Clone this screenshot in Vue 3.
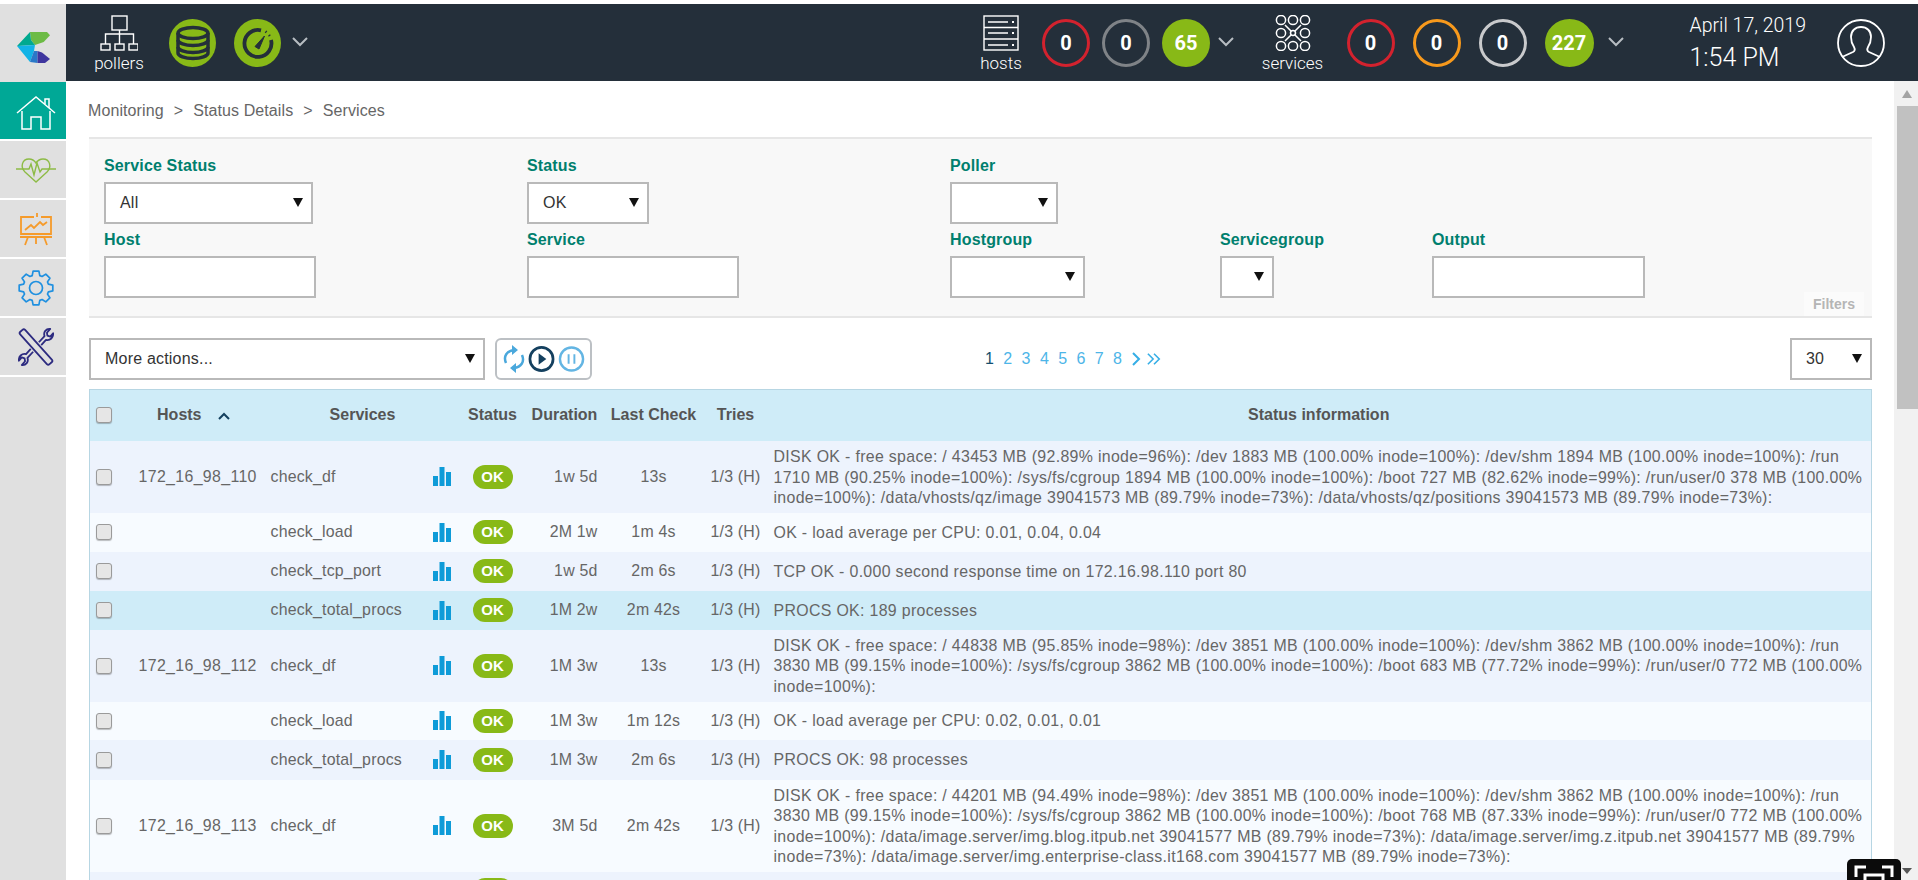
<template>
  <div class="page">
    <header class="topbar">
      <div class="logo">
        <svg width="33" height="31" viewBox="0 0 33 31">
          <polygon points="13,0 30,0 33,3.300 26.700,10 18,13 14,8" fill="#6cbb45" />
          <polygon points="13,0 14,8 18,13 0,14" fill="#00a98f" />
          <polygon points="0,14 18,13 17,19 13,30" fill="#12b3e6" />
          <polygon points="13,30 17,19 20.500,19 20.500,31" fill="#2a78c8" />
          <polygon points="20.500,19 25,20.500 33,27 28,31 20.500,31" fill="#3f369e" />
        </svg>
      </div>

      <div class="bar-group pollers">
        <div class="labelled">
          <svg width="38" height="36" viewBox="0 0 38 36" fill="none" stroke="#fff" stroke-width="1.4">
            <rect x="12" y="1" width="15" height="14" />
            <path d="M19.500 15v14M5.500 29V19h28v10" />
            <rect x="1" y="29" width="9" height="6" />
            <rect x="15" y="29" width="9" height="6" />
            <rect x="29" y="29" width="9" height="6" />
          </svg>
          <span>pollers</span>
        </div>
        <span class="round green">
          <svg width="48" height="48" viewBox="0 0 48 48" fill="none" stroke="#242f3a" stroke-width="3.500">
            <ellipse cx="24" cy="14" rx="15" ry="5.500" />
            <path d="M9 14v20c0 3 7 5.500 15 5.500s15-2.500 15-5.500V14" />
            <path d="M9 21c0 3 7 5.500 15 5.500s15-2.500 15-5.500M9 28c0 3 7 5.500 15 5.500s15-2.500 15-5.500" />
          </svg>
        </span>
        <span class="round green gauge">
          <svg width="48" height="48" viewBox="0 0 48 48" fill="none" stroke="#242f3a" stroke-width="3.800">
            <path d="M27 11.300A13.500 13.500 0 1 0 37 21" />
            <path d="M31.500 12.500l1 .8M35 16l.8 1" stroke-width="2.500" />
            <path d="M21 27.500l9.500-10.500-5.500 13z" fill="#242f3a" stroke-width="1" />
          </svg>
        </span>
        <svg class="chev" width="16" height="10" viewBox="0 0 16 10"><path d="M1 1l7 7 7-7" /></svg>
      </div>

      <div class="bar-group hosts">
        <div class="labelled">
          <svg width="36" height="36" viewBox="0 0 36 36" fill="none" stroke="#fff" stroke-width="1.4">
            <rect x="1" y="1" width="34" height="34" />
            <path d="M1 12.500h34M1 24h34M5 7h20M5 18h20M5 30h20" />
            <path d="M29 7h2M29 18h2M29 30h2" stroke-width="2" />
          </svg>
          <span>hosts</span>
        </div>
        <span class="count ring red">0</span>
        <span class="count ring grey">0</span>
        <span class="count green">65</span>
        <svg class="chev" width="16" height="10" viewBox="0 0 16 10"><path d="M1 1l7 7 7-7" /></svg>
      </div>

      <div class="bar-group services">
        <div class="labelled">
          <svg width="36" height="36" viewBox="0 0 36 36" fill="none" stroke="#fff" stroke-width="1.5">
            <circle v-for="c in serviceDots" :key="c[0] + '-' + c[1]" :cx="c[0]" :cy="c[1]" r="4.600" />
            <circle cx="18" cy="18" r="2.500" />
            <path d="M10 10l6 6M26 10l-6 6M10 26l6-6M26 26l-6-6" />
          </svg>
          <span>services</span>
        </div>
        <span class="count ring red">0</span>
        <span class="count ring orange">0</span>
        <span class="count ring light">0</span>
        <span class="count green">227</span>
        <svg class="chev" width="16" height="10" viewBox="0 0 16 10"><path d="M1 1l7 7 7-7" /></svg>
      </div>

      <div class="clock">
        <div class="date">April 17, 2019</div>
        <div class="time">1:54 PM</div>
      </div>
      <svg class="user" width="48" height="48" viewBox="0 0 48 48" fill="none" stroke="#fff" stroke-width="1.800">
        <circle cx="24" cy="24" r="23" />
        <path d="M5 38l11-5c2-1 2-3 1-5-2-3-3-6-3-10 0-6 4-10 10-10s10 4 10 10c0 4-1 7-3 10-1 2-1 4 1 5l11 5" />
      </svg>
    </header>

    <div class="body">
      <nav class="sidebar">
        <a class="tile active">
          <svg class="home" width="40" height="34" viewBox="0 0 40 34" fill="none" stroke="#fff" stroke-width="1.500">
            <path d="M1 17L20 1l19 16" />
            <path d="M29 8V3h4v9" />
            <path d="M6 15v18h9V21h10v12h9V15" />
          </svg>
        </a>
        <a class="tile">
          <svg width="40" height="26" viewBox="0 0 40 26" fill="none" stroke="#8dbb45" stroke-width="1.400">
            <path d="M0 12h7M33 12h7" />
            <path d="M20 25L9 15C4 10 6 2 13 2c3 0 5 1 7 4 2-3 4-4 7-4 7 0 9 8 4 13z" />
            <path d="M7 12h6l2-5 3 11 3-12 3 9 2-3h7" />
          </svg>
        </a>
        <a class="tile">
          <svg width="32" height="34" viewBox="0 0 32 34" fill="none" stroke="#f59b2b" stroke-width="1.800">
            <path d="M17 5V1M14 5H1v17h30V5H21" />
            <path d="M0 25h32M8 25L5 33M24 25l3 8M16 25v7" />
            <path d="M5 18l6-5 3 3 6-6 3 3 4-3" />
          </svg>
        </a>
        <a class="tile">
          <svg width="38" height="36" viewBox="0 0 38 36" fill="none" stroke="#1f90e0" stroke-width="1.700">
            <circle cx="19" cy="18" r="6.500" />
            <path :d="gearPath" stroke-linejoin="round" />
          </svg>
        </a>
        <a class="tile">
          <svg width="36" height="38" viewBox="0 0 36 40" fill="none" stroke="#2d2b80" stroke-width="1.900">
            <rect x="-3.500" y="-23" width="7" height="46" rx="2" transform="translate(18 20) rotate(-42)" />
            <path d="M21 15l6-6.500c-1.500-4 1.500-8 6-7.500l-3.500 4 .5 3 3 1 3-3.500c.5 4.500-3 8-7.500 7l-5 5.500" stroke-linejoin="round" />
            <path d="M15 25l-6 6.500c1.500 4-1.500 8-6 7.500l3.500-4-.5-3-3-1-3 3.500c-.5-4.500 3-8 7.500-7l5-5.500" stroke-linejoin="round" />
          </svg>
        </a>
      </nav>

      <main class="content">
        <div class="breadcrumb">
          <span>Monitoring</span><i>&gt;</i><span>Status Details</span><i>&gt;</i><span>Services</span>
        </div>

        <section class="filters">
          <div class="field"><label>Service Status</label><div class="select" style="width: 209px">All<b class="caret"></b></div></div>
          <div class="field"><label>Status</label><div class="select" style="width: 122px">OK<b class="caret"></b></div></div>
          <div class="field wide"><label>Poller</label><div class="select" style="width: 108px"><b class="caret"></b></div></div>

          <div class="field"><label>Host</label><div class="input" style="width: 212px"></div></div>
          <div class="field"><label>Service</label><div class="input" style="width: 212px"></div></div>
          <div class="field"><label>Hostgroup</label><div class="select" style="width: 135px"><b class="caret"></b></div></div>
          <div class="field"><label>Servicegroup</label><div class="select" style="width: 54px"><b class="caret"></b></div></div>
          <div class="field"><label>Output</label><div class="input" style="width: 213px"></div></div>

          <span class="filters-tag">Filters</span>
        </section>

        <div class="toolbar">
          <div class="select actions">More actions...<b class="caret"></b></div>
          <div class="buttons">
            <svg width="22" height="28" viewBox="0 0 22 28" fill="none" stroke="#4aa8dc" stroke-width="2.500">
              <path d="M3 18C0 11 4 6 11 5" />
              <path d="M19 10c3 7-1 12-8 13" />
              <path d="M9 0l6 5-6 5zM13 18l-6 5 6 5z" fill="#4aa8dc" stroke="none" />
            </svg>
            <svg width="27" height="28" viewBox="0 0 28 28" fill="none">
              <circle cx="14" cy="14" r="12" stroke="#14405f" stroke-width="2.800" />
              <path d="M11 8l8 6-8 6z" fill="#14405f" />
            </svg>
            <svg width="27" height="28" viewBox="0 0 28 28" fill="none" stroke="#63b5e3">
              <circle cx="14" cy="14" r="12" stroke-width="2.500" />
              <path d="M11 9v10M17 9v10" stroke-width="2" />
            </svg>
          </div>
          <div class="pager">
            <span v-for="n in 8" :key="n" :class="{ current: n === 1 }">{{ n }}</span>
            <svg width="11" height="14" viewBox="0 0 11 14" fill="none" stroke="#35aee6" stroke-width="2"><path d="M2 1l6 6-6 6" /></svg>
            <svg class="last" width="14" height="14" viewBox="0 0 16 14" fill="none" stroke="#35aee6" stroke-width="1.800"><path d="M1 1l6 6-6 6M8 1l6 6-6 6" /></svg>
          </div>
          <div class="select per-page">30<b class="caret"></b></div>
        </div>

        <table class="services-table">
          <colgroup>
            <col style="width: 36px" />
            <col style="width: 141px" />
            <col style="width: 164px" />
            <col style="width: 28px" />
            <col style="width: 68px" />
            <col style="width: 76px" />
            <col style="width: 102px" />
            <col style="width: 62px" />
            <col />
          </colgroup>
          <thead>
            <tr>
              <th class="check-cell"><input type="checkbox" class="check" /></th>
              <th class="host-head">Hosts
                <svg width="12" height="8" viewBox="0 0 12 8" fill="none" stroke="#14405f" stroke-width="2"><path d="M1 7l5-5 5 5" /></svg>
              </th>
              <th colspan="2">Services</th>
              <th>Status</th>
              <th>Duration</th>
              <th>Last Check</th>
              <th>Tries</th>
              <th>Status information</th>
            </tr>
          </thead>
          <tbody>
            <tr v-for="(row, i) in rows" :key="i" :class="{ odd: i % 2 === 0, hover: i === 3 }" :style="{ height: row.h + 'px' }">
              <td class="check-cell"><input type="checkbox" class="check" /></td>
              <td class="host">{{ row.host }}</td>
              <td class="service">{{ row.service }}</td>
              <td class="graph">
                <svg width="18" height="19" viewBox="0 0 18 19" fill="#0e9bd8"><rect x="0" y="9" width="5" height="10" /><rect x="6.500" y="0" width="5" height="19" /><rect x="13" y="5" width="5" height="14" /></svg>
              </td>
              <td class="center"><span class="ok">OK</span></td>
              <td class="duration">{{ row.duration }}</td>
              <td class="center">{{ row.last }}</td>
              <td class="center">1/3 (H)</td>
              <td class="info">{{ row.info }}</td>
            </tr>
          </tbody>
        </table>
      </main>

      <div class="scrollbar">
        <b class="arrow up"></b>
        <div class="thumb"></div>
        <div class="fill"></div>
        <b class="arrow down"></b>
      </div>
    </div>

    <div class="fullscreen">
      <svg width="40" height="22" viewBox="0 0 40 22" fill="none" stroke="#fff" stroke-width="3">
        <path d="M2 12V2h10M28 2h10v10" />
        <rect x="11" y="10" width="18" height="12" />
      </svg>
    </div>
  </div>
</template>

<script setup>
const serviceDots = [
  [6, 5], [18, 5], [30, 5],
  [6, 18], [30, 18],
  [6, 31], [18, 31], [30, 31]
]

// eight toothed outline for the settings icon
const gearPath = (() => {
  const pts = []
  for (let i = 0; i < 8; i++) {
    const a = (i * Math.PI) / 4
    const d = [[-0.3, 13], [-0.17, 17], [0.17, 17], [0.3, 13]]
    d.forEach(([off, r]) => {
      pts.push((19 + r * Math.sin(a + off)).toFixed(1) + ' ' + (18 - r * Math.cos(a + off)).toFixed(1))
    })
  }
  return 'M' + pts.join('L') + 'Z'
})()

const rows = [
  {
    h: 71, host: '172_16_98_110', service: 'check_df', duration: '1w 5d', last: '13s',
    info: 'DISK OK - free space: / 43453 MB (92.89% inode=96%): /dev 1883 MB (100.00% inode=100%): /dev/shm 1894 MB (100.00% inode=100%): /run 1710 MB (90.25% inode=100%): /sys/fs/cgroup 1894 MB (100.00% inode=100%): /boot 727 MB (82.62% inode=99%): /run/user/0 378 MB (100.00% inode=100%): /data/vhosts/qz/image 39041573 MB (89.79% inode=73%): /data/vhosts/qz/positions 39041573 MB (89.79% inode=73%):'
  },
  { h: 39, host: '', service: 'check_load', duration: '2M 1w', last: '1m 4s', info: 'OK - load average per CPU: 0.01, 0.04, 0.04' },
  { h: 39, host: '', service: 'check_tcp_port', duration: '1w 5d', last: '2m 6s', info: 'TCP OK - 0.000 second response time on 172.16.98.110 port 80' },
  { h: 39, host: '', service: 'check_total_procs', duration: '1M 2w', last: '2m 42s', info: 'PROCS OK: 189 processes' },
  {
    h: 72, host: '172_16_98_112', service: 'check_df', duration: '1M 3w', last: '13s',
    info: 'DISK OK - free space: / 44838 MB (95.85% inode=98%): /dev 3851 MB (100.00% inode=100%): /dev/shm 3862 MB (100.00% inode=100%): /run 3830 MB (99.15% inode=100%): /sys/fs/cgroup 3862 MB (100.00% inode=100%): /boot 683 MB (77.72% inode=99%): /run/user/0 772 MB (100.00% inode=100%):'
  },
  { h: 38, host: '', service: 'check_load', duration: '1M 3w', last: '1m 12s', info: 'OK - load average per CPU: 0.02, 0.01, 0.01' },
  { h: 40, host: '', service: 'check_total_procs', duration: '1M 3w', last: '2m 6s', info: 'PROCS OK: 98 processes' },
  {
    h: 92, host: '172_16_98_113', service: 'check_df', duration: '3M 5d', last: '2m 42s',
    info: 'DISK OK - free space: / 44201 MB (94.49% inode=98%): /dev 3851 MB (100.00% inode=100%): /dev/shm 3862 MB (100.00% inode=100%): /run 3830 MB (99.15% inode=100%): /sys/fs/cgroup 3862 MB (100.00% inode=100%): /boot 768 MB (87.33% inode=99%): /run/user/0 772 MB (100.00% inode=100%): /data/image.server/img.blog.itpub.net 39041577 MB (89.79% inode=73%): /data/image.server/img.z.itpub.net 39041577 MB (89.79% inode=73%): /data/image.server/img.enterprise-class.it168.com 39041577 MB (89.79% inode=73%):'
  },
  { h: 38, host: '', service: 'check_load', duration: '3M 5d', last: '1m 12s', info: 'OK - load average per CPU: 0.02, 0.01, 0.01' }
]
</script>

<style>
html, body { margin: 0; background: #fff; overflow: hidden; }
</style>

<style scoped>
.page {
  position: relative;
  height: 880px;
  padding-top: 4px;
  box-sizing: border-box;
  overflow: hidden;
  font-family: "Liberation Sans", Arial, sans-serif;
  font-size: 16px;
  color: #666;
  background: #fff;
}

/* top bar */
.topbar {
  height: 77px;
  display: flex;
  align-items: center;
  background: #242f3a;
  color: #fff;
  font-family: Roboto, "Liberation Sans", sans-serif;
  font-weight: 300;
}
.logo {
  width: 66px;
  height: 100%;
  flex: none;
  display: flex;
  align-items: center;
  justify-content: center;
  background: #e0e0e0;
}
.logo svg { margin-top: 10px; }
.bar-group { display: flex; align-items: center; }
.pollers { margin-left: 34px; }
.labelled {
  width: 38px;
  margin-top: 5px;
  display: flex;
  flex-direction: column;
  align-items: center;
  font-size: 17px;
  line-height: 24px;
}
.labelled span { white-space: nowrap; }
.round {
  width: 47px;
  height: 48px;
  border-radius: 50%;
  overflow: hidden;
  margin-left: 31px;
}
.round svg { display: block; }
.gauge { margin-left: 18px; }
.green { background: #88b917; }
.chev { fill: none; stroke: #b7bdc2; stroke-width: 2; margin-left: 11px; margin-top: -2px; }

.hosts { margin-left: 675px; }
.hosts .labelled { width: 36px; }
.hosts .count:first-of-type { margin-left: 23px; }
.services { margin-left: 40.500px; }
.services .labelled { width: 36px; }
.services .count { margin-left: 18px; }
.services .count.red { margin-left: 36px; }
.services .chev { margin-left: 14.500px; }
.count {
  width: 48px;
  height: 48px;
  box-sizing: border-box;
  border-radius: 50%;
  margin-left: 12px;
  display: flex;
  align-items: center;
  justify-content: center;
  font-size: 20px;
  font-weight: 700;
  color: #fff;
}
.services .count.green { width: 49px; }
.ring { border: 3px solid #888; }
.ring.red { border-color: #d3222e; }
.ring.grey { border-color: #7f8387; }
.ring.orange { border-color: #f7991c; }
.ring.light { border-color: #c9cacc; }
.hosts .chev { margin-left: 8px; }

.clock { margin-left: 65.500px; line-height: 1; white-space: nowrap; padding-top: 1px; }
.date { font-size: 19.500px; margin-bottom: 8.600px; }
.time { font-size: 25px; }
.user { margin-left: 31px; flex: none; }

/* main */
.body { display: flex; height: 799px; }
.sidebar {
  width: 66px;
  flex: none;
  padding-top: 1px;
  background: #e0e0e0;
  display: flex;
  flex-direction: column;
  gap: 2px;
}
.tile {
  height: 57px;
  padding-left: 5px;
  display: flex;
  align-items: center;
  justify-content: center;
  background: #e0e0e0;
  box-shadow: 0 2px 0 #fff;
}
.tile.active { background: #00a896; }
.home { margin-top: 4px; }

.content {
  flex: 1;
  min-width: 0;
  padding: 0 22px 0 23px;
}
.breadcrumb {
  height: 56px;
  box-sizing: border-box;
  padding: 4px 0 0;
  margin-left: -1px;
  display: flex;
  align-items: center;
  font-size: 16px;
  letter-spacing: .1px;
  color: #666;
}
.breadcrumb i {
  font-style: normal;
  margin: 0 10px;
}

.filters {
  position: relative;
  height: 181px;
  box-sizing: border-box;
  padding: 18px 0 0 15px;
  background: #f8f8f8;
  border-top: 2px solid #e6e6e6;
  border-bottom: 2px solid #e6e6e6;
  display: grid;
  grid-template-columns: 423px 423px 270px 212px 1fr;
  grid-template-rows: 74px 67px;
}
.field { display: flex; flex-direction: column; }
.field.wide { grid-column: 3 / -1; }
.field label {
  font-size: 16px;
  font-weight: 700;
  line-height: 18px;
  margin-bottom: 7px;
  letter-spacing: .15px;
  color: #007f6e;
}
.select, .input {
  position: relative;
  height: 42px;
  box-sizing: border-box;
  background: #fff;
  border: 2px solid #b9b9b9;
  font-size: 16px;
  letter-spacing: .2px;
  color: #333;
  display: flex;
  align-items: center;
  padding-left: 14px;
}
.caret {
  position: absolute;
  right: 8px;
  top: 14px;
  border-left: 5px solid transparent;
  border-right: 5px solid transparent;
  border-top: 9px solid #111;
}
.filters-tag {
  position: absolute;
  right: 8px;
  bottom: 0;
  width: 60px;
  height: 24px;
  line-height: 24px;
  text-align: center;
  font-size: 14px;
  font-weight: 700;
  color: #b5b5b5;
  background: #fbfbfb;
}

.toolbar {
  margin-top: 20px;
  height: 42px;
  display: flex;
  align-items: center;
}
.actions { width: 396px; }
.buttons {
  margin-left: 10px;
  width: 97px;
  height: 42px;
  box-sizing: border-box;
  border: 2px solid #bcc0c4;
  border-radius: 6px;
  display: flex;
  align-items: center;
  justify-content: center;
  gap: 3px;
}
.pager {
  margin-left: 393px;
  display: flex;
  align-items: center;
  gap: 9.400px;
  font-size: 16px;
  color: #4db5e8;
  width: 182px;
}
.pager .current { color: #14506f; }
.pager .last { margin-left: -5px; }
.per-page { margin-left: auto; width: 82px; }

.services-table {
  margin-top: 9px;
  width: 100%;
  table-layout: fixed;
  border-collapse: collapse;
  border: 1px solid #b7d6e3;
  font-size: 15.900px;
}
.services-table th {
  height: 49px;
  padding: 0 0 2px;
  background: #cfecf8;
  color: #555;
  font-size: 16px;
  font-weight: 700;
  white-space: nowrap;
  text-align: center;
}
.services-table th.host-head { padding-right: 5px; }
.host-head svg { margin-left: 12px; }
.services-table td {
  padding: 0;
  background: #f7fbff;
  color: #666;
  white-space: nowrap;
  letter-spacing: .2px;
}
.services-table tr.odd td { background: #edf3fd; }
.services-table tr.hover td { background: #cfecf8; }
.center { text-align: center; }
.services-table .check-cell { padding-right: 7px; }
.check {
  appearance: none;
  display: block;
  width: 16px;
  height: 16px;
  margin: 0 auto;
  box-sizing: border-box;
  border: 1px solid #9a9a9a;
  border-radius: 3px;
  background: #e6e6e6;
  box-shadow: 0 1px 1px rgba(0, 0, 0, .25);
}
.services-table td.host { padding-left: 13px; letter-spacing: .35px; }
.services-table td.service { padding-left: 4px; }
.services-table td.graph { padding-left: 2px; }
td.graph svg { display: block; }
.ok {
  display: inline-block;
  width: 40px;
  height: 24px;
  line-height: 24px;
  border-radius: 12px;
  background: #88b917;
  color: #fff;
  font-size: 15px;
  font-weight: 700;
  letter-spacing: 0;
}
.services-table td.duration { text-align: right; padding-right: 5px; }
.services-table td.info {
  padding: 6px 8px 4px 7px;
  line-height: 20.500px;
  white-space: normal;
  letter-spacing: .33px;
}

.scrollbar {
  width: 24px;
  flex: none;
  padding-left: 2px;
  box-sizing: border-box;
  background: #f1f1f1;
  display: flex;
  flex-direction: column;
  align-items: center;
}
.arrow {
  flex: none;
  border-left: 5px solid transparent;
  border-right: 5px solid transparent;
}
.arrow.up { margin-top: 9px; border-bottom: 8px solid #a3a3a3; }
.arrow.down { margin-bottom: 6px; border-top: 6px solid #555; }
.thumb { width: 21px; height: 303px; margin-top: 8px; background: #c1c1c1; }
.fill { flex: 1; }

.fullscreen {
  position: absolute;
  left: 1847px;
  top: 859px;
  width: 54px;
  height: 40px;
  border-radius: 5px;
  background: #0b0b0b;
  display: flex;
  justify-content: center;
  padding-top: 6px;
  box-sizing: border-box;
}
</style>
